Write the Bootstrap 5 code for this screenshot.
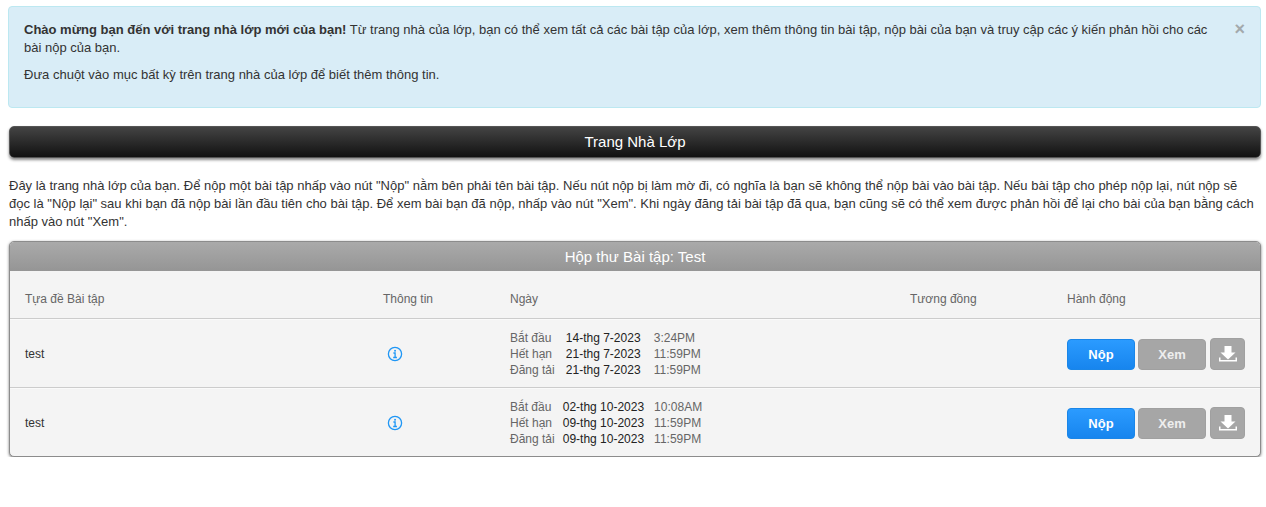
<!DOCTYPE html>
<html lang="vi">

<head>
  <meta charset="UTF-8">
  <meta name="viewport" content="width=device-width, initial-scale=1">
  <title>Trang Nhà Lớp</title>
  <link href="https://cdn.jsdelivr.net/npm/bootstrap@5.3.3/dist/css/bootstrap.min.css" rel="stylesheet">
  <style>
    body { font-family: "Liberation Sans", Arial, sans-serif; font-size: 13px; line-height: 18px; color: #333; background: #fff; }
    .page-wrap { padding: 6px 5px 0 9px; }
    .welcome-box { position: relative; height: 102px; padding: 14px 50px 0 15px; margin: 0 0 18px -1px; background: #d9edf7; border: 1px solid #bce8f1; border-radius: 4px; color: #333; }
    .welcome-box p { margin: 0 0 9px; }
    .welcome-close { position: absolute; top: 12px; right: 15px; padding: 0; border: 0; background: none; color: #a3a9ac; font: bold 18px/20px "Liberation Sans", Arial, sans-serif; }
    .home-bar { height: 32px; margin-bottom: 19px; background: linear-gradient(#444, #111); border: 1px solid #555; border-radius: 5px; box-shadow: 0 2px 3px #888; color: #fff; font-size: 15px; line-height: 30px; text-align: center; }
    .intro-text { margin: 0 0 10px; }
    .box-outer { border: 1px solid #8c8c8c; border-radius: 5px; box-shadow: 0 1px 3px #777; background: #f4f4f4; overflow: hidden; font-size: 12px; }
    .box-head { height: 29px; background: linear-gradient(#aaa, #959595); color: #fff; font-size: 15px; line-height: 29px; text-align: center; }
    .assign-table { width: 100%; table-layout: fixed; margin: 0; }
    .assign-table > thead > tr > th { height: 47px; padding: 9px 0 0 15px; font-weight: normal; color: #666; border-bottom: 1px solid #ccc; }
    .assign-table > tbody > tr > td { height: 69px; padding: 2px 0 0 15px; vertical-align: middle; border-bottom: 1px solid #ccc; box-shadow: inset 0 1px 0 #fafafa; }
    .assign-table > tbody > tr:last-child > td { border-bottom: 0; }
    .col-title { width: 358px; }
    .col-info { width: 127px; }
    .col-date { width: 400px; }
    .col-match { width: 157px; }
    .info-icon { display: block; margin-left: 1px; }
    .date-list { border-collapse: collapse; color: #222; }
    .date-list td { padding: 0; line-height: 16px; white-space: nowrap; }
    .date-name { color: #666; padding-right: 8px !important; }
    .date-day { width: 81px; text-align: center; }
    .date-time { color: #666; padding-left: 10px !important; }
    .act-row { margin-top: 2px; }
    .act-btn { height: 31px; width: 68px; padding: 0; border-radius: 4px; font-size: 13px; font-weight: bold; color: #fff; border: 1px solid transparent; }
    .act-submit { background: linear-gradient(#2b9bff, #1785ee); border-color: #1a86e8; }
    .act-view { background: #a6a6a6; border-color: #a0a0a0; color: #eee; margin-left: 3px; }
    .act-dl { width: 35px; height: 32px; margin: -1px 0 0 4px; background: #a6a6a6; border-color: #a0a0a0; display: inline-flex; align-items: center; justify-content: center; }
  </style>
</head>

<body>
  <div class="page-wrap">
    <div class="welcome-box">
      <button type="button" class="welcome-close" aria-label="Close">×</button>
      <p><strong>Chào mừng bạn đến với trang nhà lớp mới của bạn!</strong> Từ trang nhà của lớp, bạn có thể xem tất cả các bài tập của lớp, xem thêm thông tin bài tập, nộp bài của bạn và truy cập các ý kiến phản hồi cho các bài nộp của bạn.</p>
      <p>Đưa chuột vào mục bất kỳ trên trang nhà của lớp để biết thêm thông tin.</p>
    </div>

    <div class="home-bar">Trang Nhà Lớp</div>

    <p class="intro-text">Đây là trang nhà lớp của bạn. Để nộp một bài tập nhấp vào nút "Nộp" nằm bên phải tên bài tập. Nếu nút nộp bị làm mờ đi, có nghĩa là bạn sẽ không thể nộp bài vào bài tập. Nếu bài tập cho phép nộp lại, nút nộp sẽ đọc là "Nộp lại" sau khi bạn đã nộp bài lần đầu tiên cho bài tập. Để xem bài bạn đã nộp, nhấp vào nút "Xem". Khi ngày đăng tải bài tập đã qua, bạn cũng sẽ có thể xem được phản hồi để lại cho bài của bạn bằng cách nhấp vào nút "Xem".</p>

    <div class="box-outer">
      <div class="box-head">Hộp thư Bài tập: Test</div>
      <table class="assign-table">
        <thead>
          <tr>
            <th class="col-title">Tựa đề Bài tập</th>
            <th class="col-info">Thông tin</th>
            <th class="col-date">Ngày</th>
            <th class="col-match">Tương đồng</th>
            <th>Hành động</th>
          </tr>
        </thead>
        <tbody>
          <tr>
            <td>test</td>
            <td>
              <svg class="info-icon ms-1" width="16" height="16" viewBox="0 0 16 16" fill="none" stroke="#1e96f5"><circle cx="8" cy="8" r="6.6" stroke-width="1.3"/><path d="M6.4 7h1.7v4.4M6.2 11.5h3.7" stroke-width="1.3"/><rect x="7.2" y="3.9" width="1.7" height="1.7" fill="#1e96f5" stroke="none"/></svg>
            </td>
            <td>
              <table class="date-list">
                <tr><td class="date-name">Bắt đầu</td><td class="date-day">14-thg 7-2023</td><td class="date-time">3:24PM</td></tr>
                <tr><td class="date-name">Hết hạn</td><td class="date-day">21-thg 7-2023</td><td class="date-time">11:59PM</td></tr>
                <tr><td class="date-name">Đăng tải</td><td class="date-day">21-thg 7-2023</td><td class="date-time">11:59PM</td></tr>
              </table>
            </td>
            <td></td>
            <td>
              <div class="d-flex align-items-center act-row">
                <button type="button" class="act-btn act-submit">Nộp</button>
                <button type="button" class="act-btn act-view">Xem</button>
                <button type="button" class="act-btn act-dl" aria-label="Tải xuống">
                  <svg width="20" height="20" viewBox="0 0 20 20" fill="#fff"><path d="M6.5 2h7v6.5h4L10 15.5 2.5 8.5h4z"/><path d="M1 13.5h1.5V16h15v-2.5H19v4H1z"/></svg>
                </button>
              </div>
            </td>
          </tr>
          <tr>
            <td>test</td>
            <td>
              <svg class="info-icon ms-1" width="16" height="16" viewBox="0 0 16 16" fill="none" stroke="#1e96f5"><circle cx="8" cy="8" r="6.6" stroke-width="1.3"/><path d="M6.4 7h1.7v4.4M6.2 11.5h3.7" stroke-width="1.3"/><rect x="7.2" y="3.9" width="1.7" height="1.7" fill="#1e96f5" stroke="none"/></svg>
            </td>
            <td>
              <table class="date-list">
                <tr><td class="date-name">Bắt đầu</td><td class="date-day">02-thg 10-2023</td><td class="date-time">10:08AM</td></tr>
                <tr><td class="date-name">Hết hạn</td><td class="date-day">09-thg 10-2023</td><td class="date-time">11:59PM</td></tr>
                <tr><td class="date-name">Đăng tải</td><td class="date-day">09-thg 10-2023</td><td class="date-time">11:59PM</td></tr>
              </table>
            </td>
            <td></td>
            <td>
              <div class="d-flex align-items-center act-row">
                <button type="button" class="act-btn act-submit">Nộp</button>
                <button type="button" class="act-btn act-view">Xem</button>
                <button type="button" class="act-btn act-dl" aria-label="Tải xuống">
                  <svg width="20" height="20" viewBox="0 0 20 20" fill="#fff"><path d="M6.5 2h7v6.5h4L10 15.5 2.5 8.5h4z"/><path d="M1 13.5h1.5V16h15v-2.5H19v4H1z"/></svg>
                </button>
              </div>
            </td>
          </tr>
        </tbody>
      </table>
    </div>
  </div>

  <script src="https://cdn.jsdelivr.net/npm/bootstrap@5.3.3/dist/js/bootstrap.bundle.min.js"></script>
</body>

</html>
